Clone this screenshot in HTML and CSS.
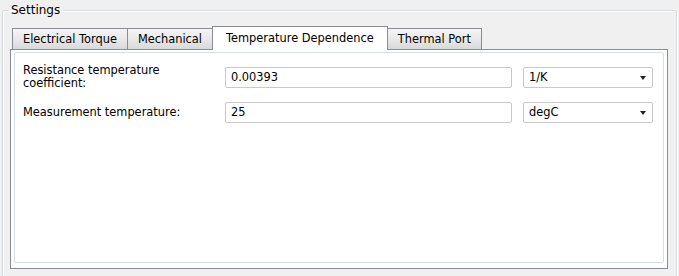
FILE: index.html
```html
<!DOCTYPE html>
<html lang="en">
<head>
    <meta charset="UTF-8">
    <title>Settings - Temperature Dependence</title>
    <link rel="stylesheet" href="styles.css">
</head>
<body>
    <fieldset class="settings">
        <legend>Settings</legend>
        <div class="tabs">
            <div class="tab">Electrical Torque</div>
            <div class="tab">Mechanical</div>
            <div class="tab active">Temperature Dependence</div>
            <div class="tab">Thermal Port</div>
        </div>
        <div class="panel">
            <div class="page">
                <div class="row">
                    <label>Resistance temperature<br>coefficient:</label>
                    <div class="field">0.00393</div>
                    <div class="combo">1/K <span class="arrow"></span></div>
                </div>
                <div class="row">
                    <label>Measurement temperature:</label>
                    <div class="field">25</div>
                    <div class="combo">degC <span class="arrow"></span></div>
                </div>
            </div>
        </div>
    </fieldset>
</body>
</html>
```

FILE: styles.css
```css
* {
    box-sizing: border-box;
}

body {
    margin: 0;
    padding: 3px 2px 0 2px;
    background: #f0f0f0;
    color: #000;
    font-family: "DejaVu Sans", Tahoma, sans-serif;
    font-size: 11.4px;
}

fieldset.settings {
    margin: 0;
    padding: 1px 8px 0 7px;
    height: 300px;
    border: 1px solid #d5dadf;
    border-radius: 3px;
    box-shadow: inset 1px 1px 0 #fff, 1px 1px 0 #fff;

    legend {
        margin-left: -2px;
        padding: 0 3px;
        font-size: 12px;
        line-height: 14px;
    }
}

.tabs {
    display: flex;
    align-items: flex-end;
    height: 24px;
    padding-left: 2px;
    margin-top: 7px;

    .tab {
        height: 21px;
        line-height: 20px;
        padding: 0 10px;
        border: 1px solid #898c95;
        border-bottom: none;
        margin-right: -1px;
        background: linear-gradient(#f4f4f4, #e9e9e9 50%, #d9d9d9);
        white-space: nowrap;
    }
    .tab.active {
        position: relative;
        z-index: 1;
        height: 24px;
        line-height: 22px;
        margin-bottom: -1px;
        padding: 0 13px 0 13px;
        background: #fff;
    }
}

.panel {
    width: 658px;
    height: 220px;
    border: 1px solid #898c95;
    background: #fff;
    padding: 2px 3px 0 3px;
}

.page {
    height: 211px;
    border: 1px solid #d5dfe5;
    border-radius: 2px;
    padding: 11px 0 0 8px;

    .row {
        display: grid;
        grid-template-columns: 191px 287px 130px;
        column-gap: 11px;
        align-items: center;
        margin-bottom: 12px;
        line-height: 13px;
    }
    .field, .combo {
        height: 21px;
        line-height: 19px;
        padding-left: 5px;
        border: 1px solid #c9c9c9;
        border-radius: 2px;
        background: #fff;
    }
    .combo {
        position: relative;
    }
    .arrow {
        position: absolute;
        right: 6px;
        top: 8px;
        border-left: 3px solid transparent;
        border-right: 3px solid transparent;
        border-top: 4px solid #222;
    }
}
```
